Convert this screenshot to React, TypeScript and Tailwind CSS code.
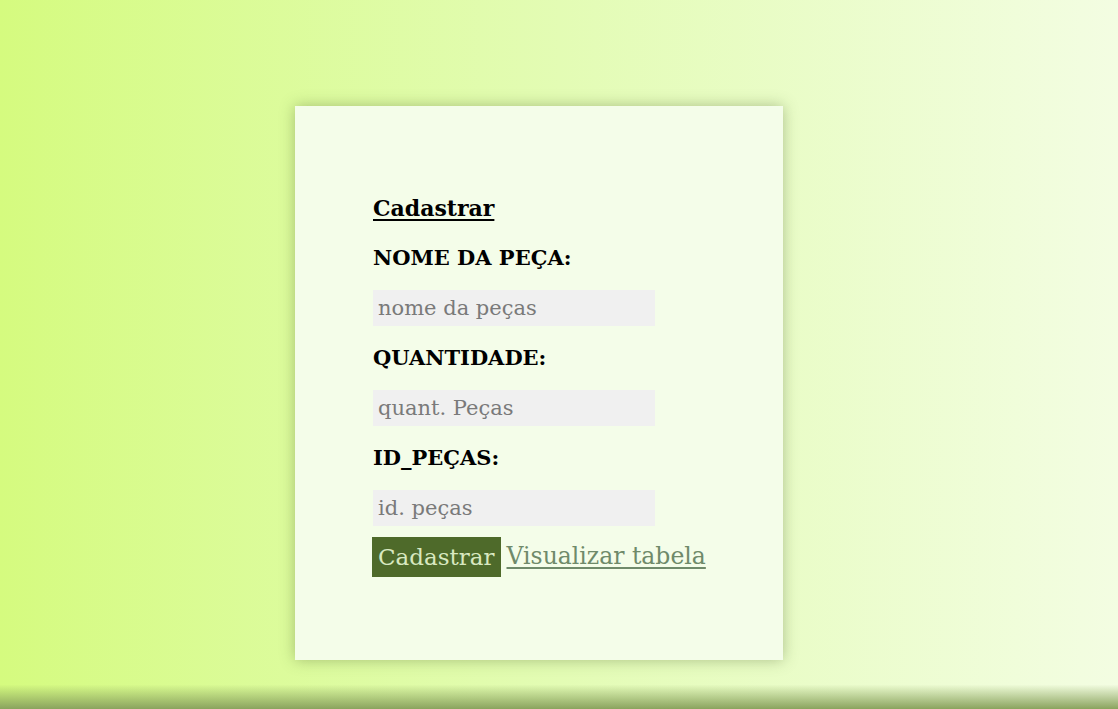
import React from "react";

const serif = { fontFamily: '"DejaVu Serif", "Liberation Serif", serif' };

function Field({ label, placeholder }: { label: string; placeholder: string }) {
  return (
    <div className="flex flex-col">
      <label className="text-[21px] leading-[24px] font-bold text-black mt-[20px]">{label}</label>
      <input
        type="text"
        placeholder={placeholder}
        className="mt-[20px] w-[282px] h-[36px] bg-[#f0f0f0] px-[5px] text-[21px] text-[#333] placeholder:text-[#7a7a7a] outline-none"
      />
    </div>
  );
}

export default function App() {
  return (
    <div
      className="min-h-screen w-full flex flex-col bg-linear-to-r from-[#d5fb7f] via-[#e3fcb4] to-[#f3fde2]"
      style={serif}
    >
      <div className="flex justify-center pr-[40px] pt-[106px]">
        <div className="w-[488px] h-[554px] bg-[#f4fde9] shadow-[0_0_14px_rgba(60,80,30,0.35)] pl-[78px] pt-[88px]">
          <a href="#" className="block w-fit mb-[4px] text-[22px] leading-[28px] font-bold text-black underline underline-offset-[3px]">
            Cadastrar
          </a>
          <Field label="NOME DA PEÇA:" placeholder="nome da peças" />
          <Field label="QUANTIDADE:" placeholder="quant. Peças" />
          <Field label="ID_PEÇAS:" placeholder="id. peças" />
          <div className="flex items-center gap-[6px] mt-[11px] -ml-px">
            <button className="h-[40px] px-[6px] bg-[#4e6a2a] text-[#d8e8c0] text-[23px] leading-[40px]">
              Cadastrar
            </button>
            <a href="#" className="text-[23.5px] text-[#6f8a6a] underline underline-offset-[3px]">
              Visualizar tabela
            </a>
          </div>
        </div>
      </div>
      <div className="flex-1 min-h-[49px] bg-linear-to-b from-transparent via-transparent to-[#8aa35e]" />
    </div>
  );
}
